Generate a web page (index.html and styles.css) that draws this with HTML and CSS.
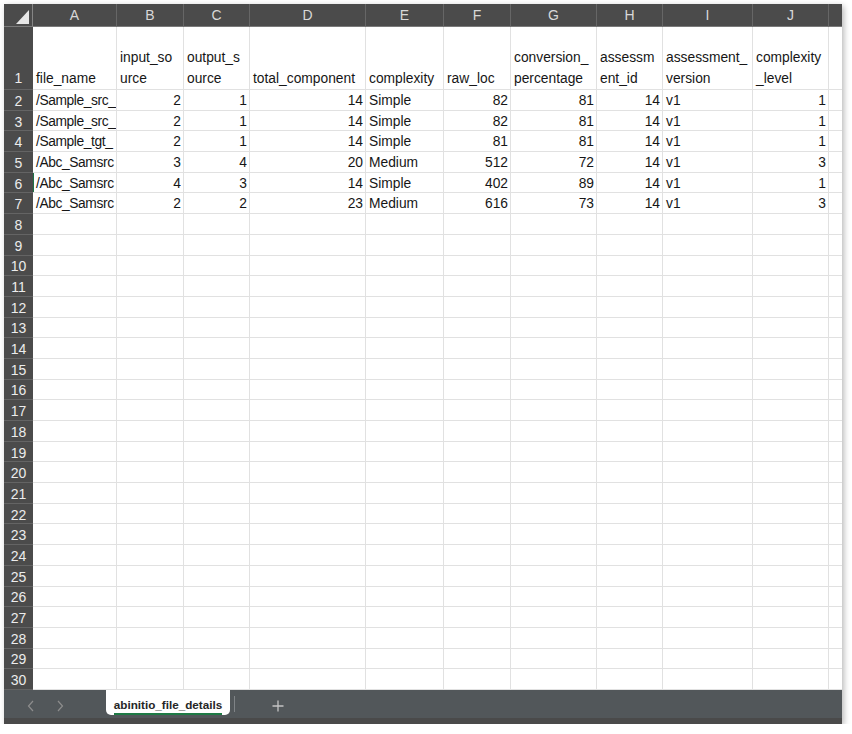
FILE: index.html
```html
<!DOCTYPE html>
<html lang="en">

<head>
    <meta charset="UTF-8" />
    <title>abinitio_file_details</title>
    <link rel="stylesheet" href="styles.css">
</head>

<body>

    <div class="frame">
        <table class="sheet">
            <colgroup>
                <col class="w-rh">
                <col class="w-a">
                <col class="w-b">
                <col class="w-c">
                <col class="w-d">
                <col class="w-e">
                <col class="w-f">
                <col class="w-g">
                <col class="w-h">
                <col class="w-i">
                <col class="w-j">
                <col class="w-k">
            </colgroup>
            <tr class="cols">
                <th class="corner">
                    <svg width="28" height="22" viewBox="0 0 28 22">
                        <polygon points="12,20 25,20 25,6" fill="#e6e6e6" />
                    </svg>
                </th>
                <th>A</th><th>B</th><th>C</th><th>D</th><th>E</th><th>F</th><th>G</th><th>H</th><th>I</th><th>J</th><th></th>
            </tr>
            <tr class="head">
                <th class="rh">1</th>
                <td>file_name</td>
                <td>input_so<br>urce</td>
                <td>output_s<br>ource</td>
                <td>total_component</td>
                <td>complexity</td>
                <td>raw_loc</td>
                <td>conversion_<br>percentage</td>
                <td>assessm<br>ent_id</td>
                <td>assessment_<br>version</td>
                <td>complexity<br>_level</td>
                <td></td>
            </tr>
            <tr class="r"><th class="rh">2</th><td class="fn">/Sample_src_</td><td class="n">2</td><td class="n">1</td><td class="n">14</td><td>Simple</td><td class="n">82</td><td class="n">81</td><td class="n">14</td><td>v1</td><td class="n">1</td><td></td></tr>
            <tr class="r"><th class="rh">3</th><td class="fn">/Sample_src_</td><td class="n">2</td><td class="n">1</td><td class="n">14</td><td>Simple</td><td class="n">82</td><td class="n">81</td><td class="n">14</td><td>v1</td><td class="n">1</td><td></td></tr>
            <tr class="r"><th class="rh">4</th><td class="fn">/Sample_tgt_</td><td class="n">2</td><td class="n">1</td><td class="n">14</td><td>Simple</td><td class="n">81</td><td class="n">81</td><td class="n">14</td><td>v1</td><td class="n">1</td><td></td></tr>
            <tr class="r"><th class="rh">5</th><td class="fn">/Abc_Samsrc</td><td class="n">3</td><td class="n">4</td><td class="n">20</td><td>Medium</td><td class="n">512</td><td class="n">72</td><td class="n">14</td><td>v1</td><td class="n">3</td><td></td></tr>
            <tr class="r"><th class="rh">6</th><td class="fn sel">/Abc_Samsrc</td><td class="n">4</td><td class="n">3</td><td class="n">14</td><td>Simple</td><td class="n">402</td><td class="n">89</td><td class="n">14</td><td>v1</td><td class="n">1</td><td></td></tr>
            <tr class="r"><th class="rh">7</th><td class="fn">/Abc_Samsrc</td><td class="n">2</td><td class="n">2</td><td class="n">23</td><td>Medium</td><td class="n">616</td><td class="n">73</td><td class="n">14</td><td>v1</td><td class="n">3</td><td></td></tr>
            <tr class="r"><th class="rh">8</th><td></td><td></td><td></td><td></td><td></td><td></td><td></td><td></td><td></td><td></td><td></td></tr>
            <tr class="r"><th class="rh">9</th><td></td><td></td><td></td><td></td><td></td><td></td><td></td><td></td><td></td><td></td><td></td></tr>
            <tr class="r"><th class="rh">10</th><td></td><td></td><td></td><td></td><td></td><td></td><td></td><td></td><td></td><td></td><td></td></tr>
            <tr class="r"><th class="rh">11</th><td></td><td></td><td></td><td></td><td></td><td></td><td></td><td></td><td></td><td></td><td></td></tr>
            <tr class="r"><th class="rh">12</th><td></td><td></td><td></td><td></td><td></td><td></td><td></td><td></td><td></td><td></td><td></td></tr>
            <tr class="r"><th class="rh">13</th><td></td><td></td><td></td><td></td><td></td><td></td><td></td><td></td><td></td><td></td><td></td></tr>
            <tr class="r"><th class="rh">14</th><td></td><td></td><td></td><td></td><td></td><td></td><td></td><td></td><td></td><td></td><td></td></tr>
            <tr class="r"><th class="rh">15</th><td></td><td></td><td></td><td></td><td></td><td></td><td></td><td></td><td></td><td></td><td></td></tr>
            <tr class="r"><th class="rh">16</th><td></td><td></td><td></td><td></td><td></td><td></td><td></td><td></td><td></td><td></td><td></td></tr>
            <tr class="r"><th class="rh">17</th><td></td><td></td><td></td><td></td><td></td><td></td><td></td><td></td><td></td><td></td><td></td></tr>
            <tr class="r"><th class="rh">18</th><td></td><td></td><td></td><td></td><td></td><td></td><td></td><td></td><td></td><td></td><td></td></tr>
            <tr class="r"><th class="rh">19</th><td></td><td></td><td></td><td></td><td></td><td></td><td></td><td></td><td></td><td></td><td></td></tr>
            <tr class="r"><th class="rh">20</th><td></td><td></td><td></td><td></td><td></td><td></td><td></td><td></td><td></td><td></td><td></td></tr>
            <tr class="r"><th class="rh">21</th><td></td><td></td><td></td><td></td><td></td><td></td><td></td><td></td><td></td><td></td><td></td></tr>
            <tr class="r"><th class="rh">22</th><td></td><td></td><td></td><td></td><td></td><td></td><td></td><td></td><td></td><td></td><td></td></tr>
            <tr class="r"><th class="rh">23</th><td></td><td></td><td></td><td></td><td></td><td></td><td></td><td></td><td></td><td></td><td></td></tr>
            <tr class="r"><th class="rh">24</th><td></td><td></td><td></td><td></td><td></td><td></td><td></td><td></td><td></td><td></td><td></td></tr>
            <tr class="r"><th class="rh">25</th><td></td><td></td><td></td><td></td><td></td><td></td><td></td><td></td><td></td><td></td><td></td></tr>
            <tr class="r"><th class="rh">26</th><td></td><td></td><td></td><td></td><td></td><td></td><td></td><td></td><td></td><td></td><td></td></tr>
            <tr class="r"><th class="rh">27</th><td></td><td></td><td></td><td></td><td></td><td></td><td></td><td></td><td></td><td></td><td></td></tr>
            <tr class="r"><th class="rh">28</th><td></td><td></td><td></td><td></td><td></td><td></td><td></td><td></td><td></td><td></td><td></td></tr>
            <tr class="r"><th class="rh">29</th><td></td><td></td><td></td><td></td><td></td><td></td><td></td><td></td><td></td><td></td><td></td></tr>
            <tr class="r"><th class="rh">30</th><td></td><td></td><td></td><td></td><td></td><td></td><td></td><td></td><td></td><td></td><td></td></tr>
        </table>

        <div class="tabbar">
            <div class="nav">
                <svg width="8" height="12" viewBox="0 0 8 12"><polyline points="6,1 1.5,6 6,11" fill="none" stroke="#8d8d8d" stroke-width="1.2" /></svg>
                <svg width="8" height="12" viewBox="0 0 8 12"><polyline points="2,1 6.5,6 2,11" fill="none" stroke="#8d8d8d" stroke-width="1.2" /></svg>
            </div>
            <div class="tab"><span>abinitio_file_details</span></div>
            <div class="tabsep"></div>
            <div class="add">
                <svg width="12" height="12" viewBox="0 0 12 12"><path d="M6 0.5v11M0.5 6h11" stroke="#c4c4c4" stroke-width="1.3" /></svg>
            </div>
        </div>
        <div class="strip"></div>
    </div>

</body>

</html>
```

FILE: styles.css
```css
* {
    box-sizing: border-box;
}

html,
body {
    margin: 0;
    padding: 0;
    background-color: #ffffff;
}

.frame {
    width: 838px;
    margin: 4px 0 0 4px;
    box-shadow: 2px 2px 6px rgba(0, 0, 0, 0.28);
    font-family: "Liberation Sans", Arial, sans-serif;
}

/* grid */

.sheet {
    table-layout: fixed;
    width: 838px;
    border-collapse: separate;
    border-spacing: 0;
}

.w-rh { width: 29px; }
.w-a { width: 84px; }
.w-b { width: 67px; }
.w-c { width: 66px; }
.w-d { width: 116px; }
.w-e { width: 78px; }
.w-f { width: 67px; }
.w-g { width: 86px; }
.w-h { width: 66px; }
.w-i { width: 90px; }
.w-j { width: 76px; }
.w-k { width: 13px; }

.cols {
    height: 22px;
}

.cols th {
    padding: 0;
    background-color: #4b4b4b;
    color: #d8d8d8;
    font-size: 14px;
    font-weight: 400;
    text-align: center;
    border-right: 1px solid #666666;
    border-bottom: 1px solid #7a7a7a;
}

.cols th:last-child {
    border-right: none;
}

.cols .corner {
    border-right: 1px solid #858585;
}

.corner svg {
    display: block;
}

.head {
    height: 63px;
}

.r {
    height: 20.7px;
}

td {
    padding: 2px 3px 0 3px;
    border-right: 1px solid #e1e1e1;
    border-bottom: 1px solid #e1e1e1;
    font-size: 13.8px;
    color: #161616;
    white-space: nowrap;
    overflow: hidden;
    vertical-align: middle;
    line-height: 16px;
}

td:last-child {
    border-right: none;
}

.head td {
    vertical-align: bottom;
    line-height: 21px;
    padding-top: 0;
    padding-bottom: 0;
}

td.n {
    text-align: right;
    padding-right: 2px;
}

td.fn {
    padding-right: 0;
    letter-spacing: -0.4px;
}

td.sel {
    box-shadow: inset 1px 0 0 #1e7145;
}

.rh {
    padding: 2px 0 0 0;
    background-color: #4b4b4b;
    color: #ececec;
    font-size: 14px;
    font-weight: 400;
    text-align: center;
    border-bottom: 1px solid #646464;
    line-height: 16px;
}

.head .rh {
    vertical-align: bottom;
    line-height: 21px;
    padding-top: 0;
}

/* sheet tabs */

.tabbar {
    display: flex;
    align-items: flex-start;
    height: 28px;
    background-color: #52575a;
}

.nav {
    display: flex;
    gap: 21px;
    width: 102px;
    padding: 10px 0 0 23px;
}

.nav svg,
.add svg {
    display: block;
}

.tab {
    width: 124px;
    height: 25px;
    background-color: #ffffff;
    border-radius: 0 0 5px 5px;
    text-align: center;
    padding-top: 5px;
}

.tab span {
    display: inline-block;
    font-size: 11.7px;
    font-weight: 700;
    color: #262626;
    padding-bottom: 2px;
    border-bottom: 2px solid #1e7a45;
    line-height: 13px;
}

.tabsep {
    width: 1px;
    height: 16px;
    margin: 6px 0 0 4px;
    background-color: #7f8386;
}

.add {
    padding: 10px 0 0 37px;
}

.strip {
    height: 6px;
    background-color: #4a4a4a;
}
```
